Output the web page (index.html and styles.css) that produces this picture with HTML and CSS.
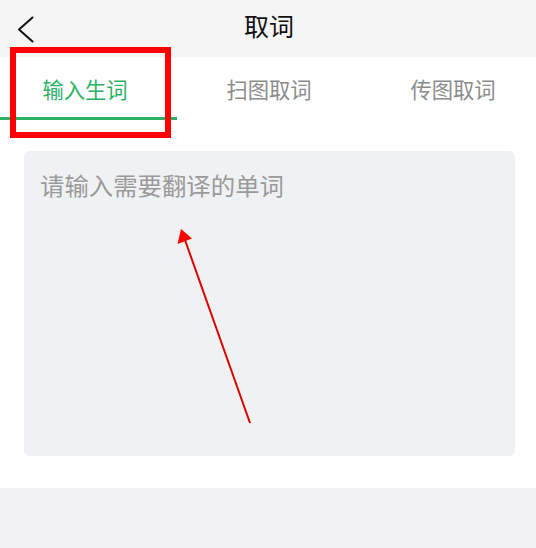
FILE: index.html
```html
<!DOCTYPE html>
<html lang="zh-CN">
<head>
<meta charset="utf-8">
<title>取词</title>
<link rel="stylesheet" href="styles.css">
</head>
<body>
<div class="page">
  <header class="nav">
    <div class="nav-left">
      <svg class="back" width="18" height="28" viewBox="0 0 18 28">
        <polyline points="15.5,1.5 2,13.5 15.5,25.5" fill="none" stroke="#111" stroke-width="2" stroke-linecap="round" stroke-linejoin="round"/>
      </svg>
    </div>
    <div class="nav-title">取词</div>
    <div class="nav-right"></div>
  </header>
  <nav class="tabs">
    <div class="tab active">输入生词</div>
    <div class="tab">扫图取词</div>
    <div class="tab">传图取词</div>
  </nav>
  <main class="content">
    <div class="input-box">
      <div class="placeholder">请输入需要翻译的单词</div>
    </div>
  </main>
  <div class="footer-area"></div>

  <div class="mark-box"></div>
  <svg class="mark-arrow" width="536" height="548" viewBox="0 0 536 548">
    <line x1="250" y1="423" x2="185" y2="240" stroke="#d90000" stroke-width="2"/>
    <polygon points="181,229 177.5,244 192,238.5" fill="#ff0000"/>
  </svg>
</div>
</body>
</html>
```
FILE: styles.css
```css
html, body {
  margin: 0;
  padding: 0;
  background: #ffffff;
}
body {
  font-family: "Noto Sans CJK SC", "Noto Sans", sans-serif;
}
.page {
  position: relative;
  width: 536px;
  height: 548px;
  overflow: hidden;
  display: flex;
  flex-direction: column;
}
.nav {
  height: 57px;
  background: #f5f5f5;
  display: grid;
  grid-template-columns: 1fr auto 1fr;
  align-items: center;
  flex: none;
}
.nav-left {
  padding-left: 17px;
  display: flex;
  align-items: center;
  padding-top: 2px;
}
.back {
  display: block;
}
.nav-title {
  font-size: 25px;
  line-height: 30px;
  color: #111111;
  margin-top: -7px;
  margin-left: 2px;
}
.tabs {
  display: flex;
  height: 63px;
  flex: none;
  background: #ffffff;
  margin-left: -7px;
  overflow: visible;
}
.tab {
  flex: none;
  width: 184px;
  box-sizing: border-box;
  padding-top: 2px;
  display: flex;
  align-items: center;
  justify-content: center;
  font-size: 21.3px;
  color: #8c8c8c;
  border-bottom: 3px solid transparent;
}
.tab.active {
  color: #2bb168;
  border-bottom-color: #2bb168;
}
.content {
  padding: 31px 21px 32px 24px;
  flex: none;
}
.input-box {
  height: 305px;
  background: #f0f1f3;
  border-radius: 6px;
  padding: 17px 16px;
  box-sizing: border-box;
}
.placeholder {
  font-size: 24.4px;
  line-height: 34px;
  color: #9a9a9a;
}
.footer-area {
  flex: 1;
  background: #f2f2f6;
}
.mark-box {
  position: absolute;
  left: 10px;
  top: 47px;
  width: 161px;
  height: 91px;
  box-sizing: border-box;
  border: 6px solid #ff0000;
}
.mark-arrow {
  position: absolute;
  left: 0;
  top: 0;
  pointer-events: none;
}
```
